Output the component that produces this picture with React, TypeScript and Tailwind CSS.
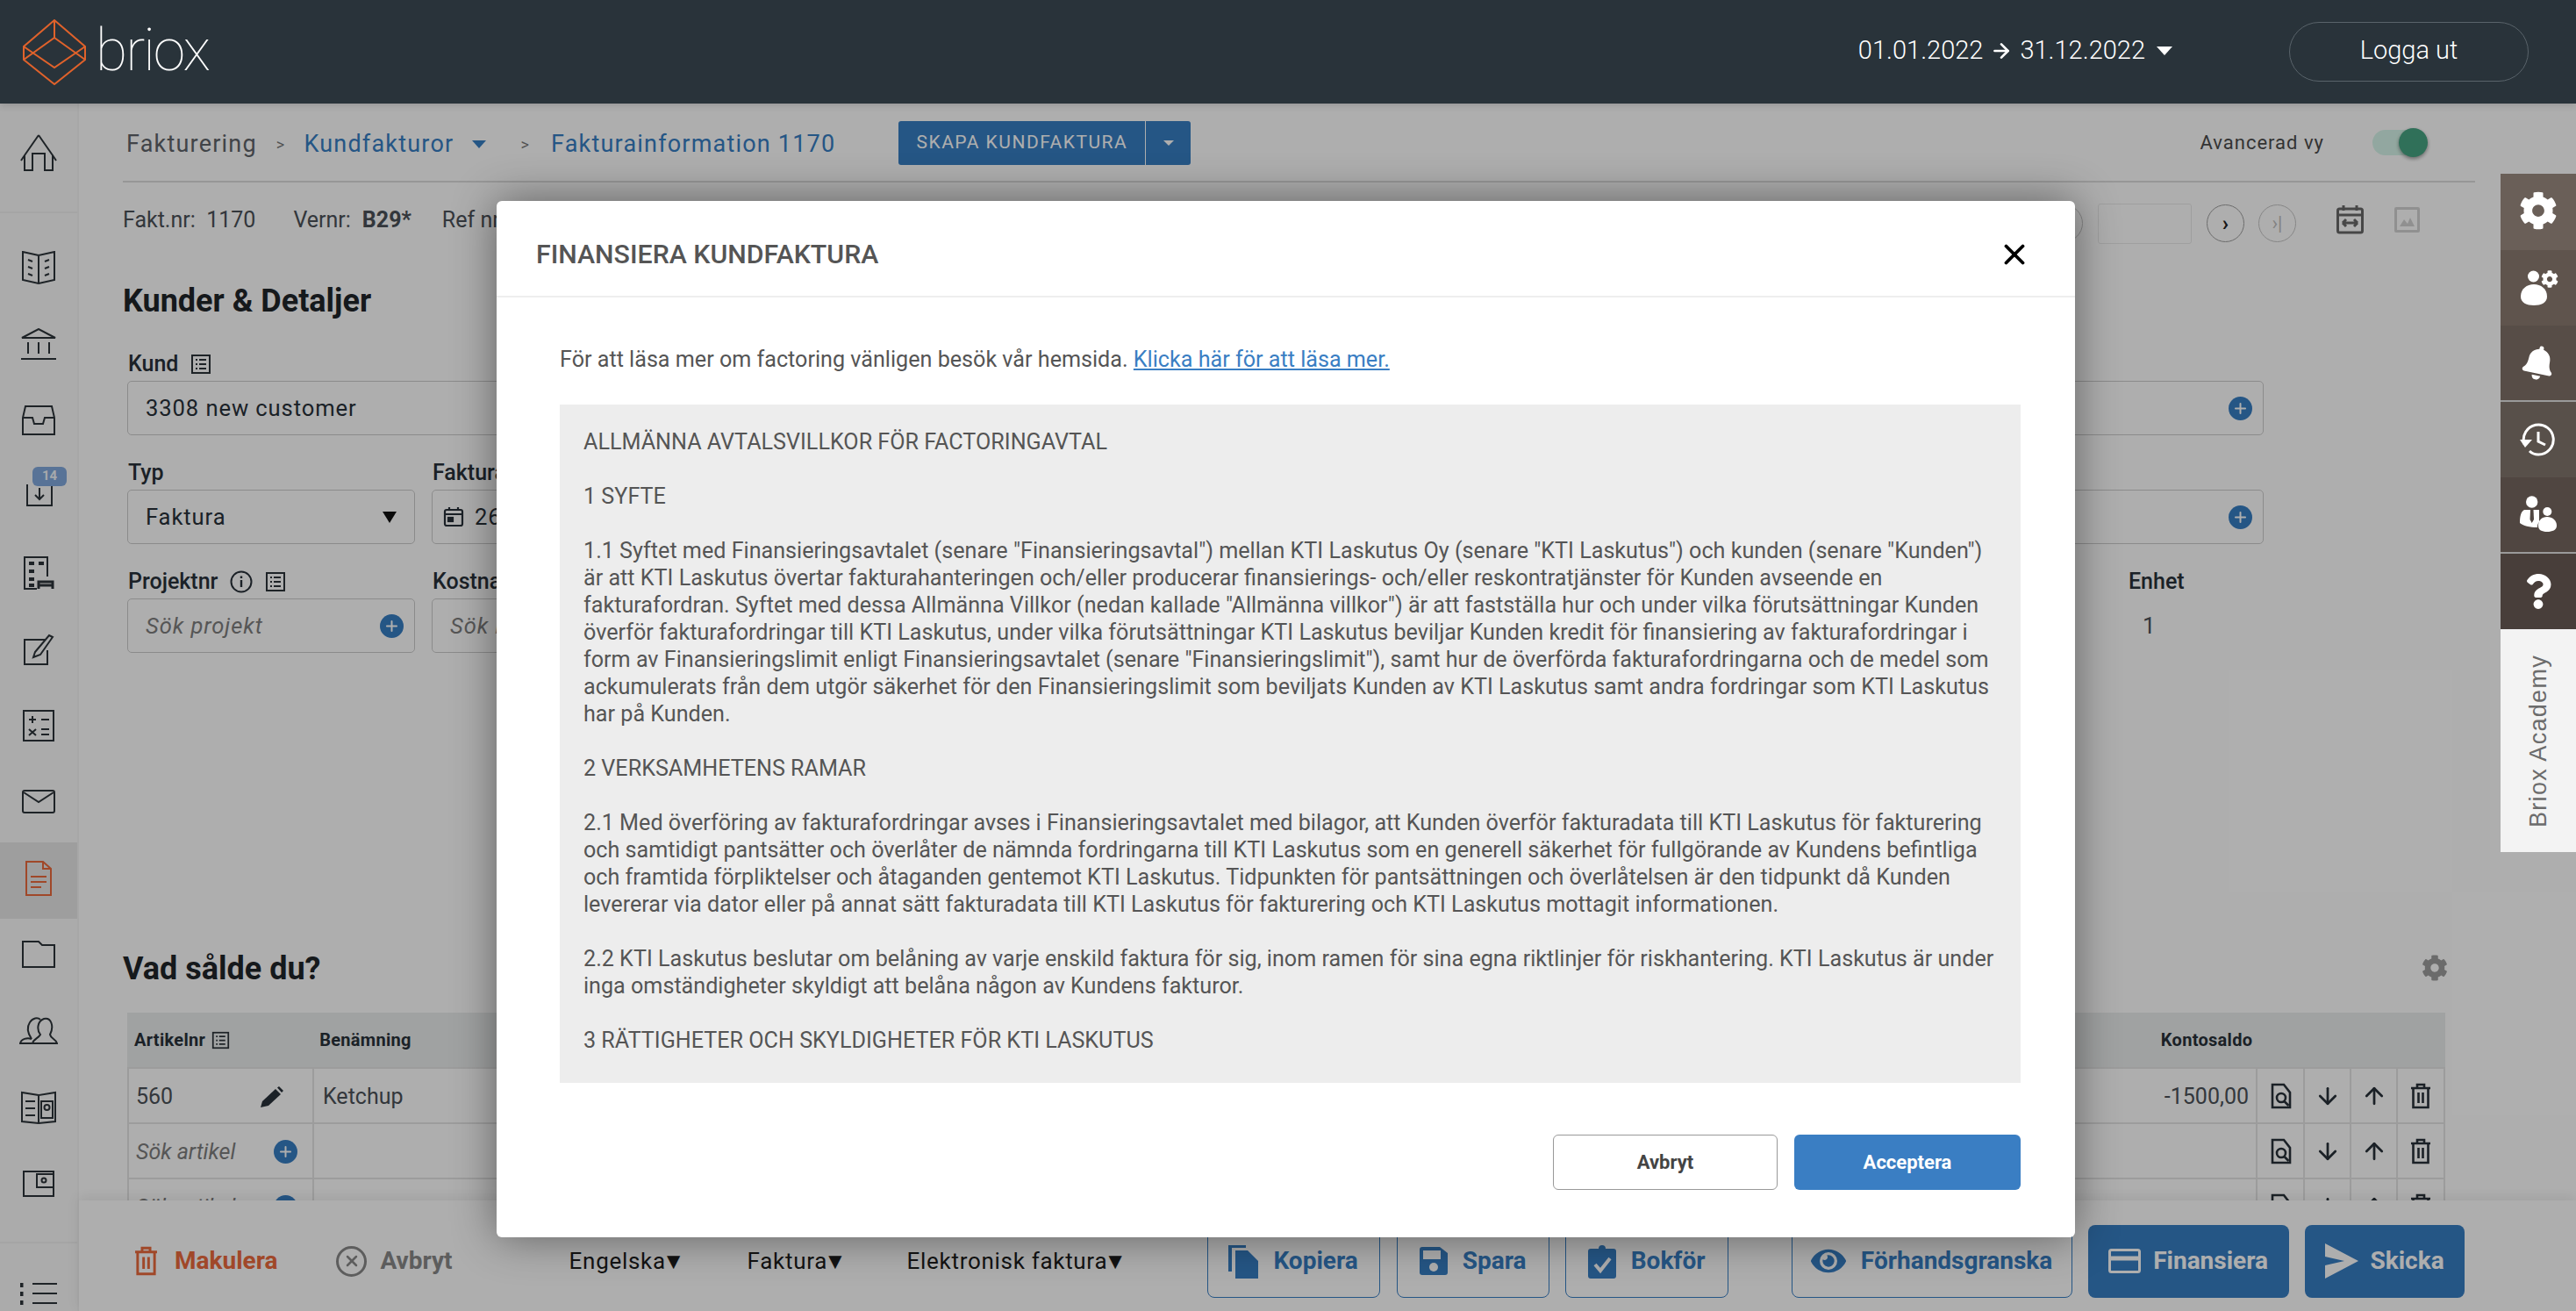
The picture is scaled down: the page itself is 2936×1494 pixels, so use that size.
import { Fragment, type ReactNode } from 'react'
import { FaBell, FaCog, FaQuestion, FaEye } from 'react-icons/fa'
import { ArrowDown, ArrowRight, ArrowUp, Plus, X } from 'lucide-react'

const terms = `ALLMÄNNA AVTALSVILLKOR FÖR FACTORINGAVTAL

1 SYFTE

1.1 Syftet med Finansieringsavtalet (senare "Finansieringsavtal") mellan KTI Laskutus Oy (senare "KTI Laskutus") och kunden (senare "Kunden")
är att KTI Laskutus övertar fakturahanteringen och/eller producerar finansierings- och/eller reskontratjänster för Kunden avseende en
fakturafordran. Syftet med dessa Allmänna Villkor (nedan kallade "Allmänna villkor") är att fastställa hur och under vilka förutsättningar Kunden
överför fakturafordringar till KTI Laskutus, under vilka förutsättningar KTI Laskutus beviljar Kunden kredit för finansiering av fakturafordringar i
form av Finansieringslimit enligt Finansieringsavtalet (senare "Finansieringslimit"), samt hur de överförda fakturafordringarna och de medel som
ackumulerats från dem utgör säkerhet för den Finansieringslimit som beviljats Kunden av KTI Laskutus samt andra fordringar som KTI Laskutus
har på Kunden.

2 VERKSAMHETENS RAMAR

2.1 Med överföring av fakturafordringar avses i Finansieringsavtalet med bilagor, att Kunden överför fakturadata till KTI Laskutus för fakturering
och samtidigt pantsätter och överlåter de nämnda fordringarna till KTI Laskutus som en generell säkerhet för fullgörande av Kundens befintliga
och framtida förpliktelser och åtaganden gentemot KTI Laskutus. Tidpunkten för pantsättningen och överlåtelsen är den tidpunkt då Kunden
levererar via dator eller på annat sätt fakturadata till KTI Laskutus för fakturering och KTI Laskutus mottagit informationen.

2.2 KTI Laskutus beslutar om belåning av varje enskild faktura för sig, inom ramen för sina egna riktlinjer för riskhantering. KTI Laskutus är under
inga omständigheter skyldigt att belåna någon av Kundens fakturor.

3 RÄTTIGHETER OCH SKYLDIGHETER FÖR KTI LASKUTUS`

function Line({ w, h, children, className = '' }: { w: number; h: number; children: ReactNode; className?: string }) {
  return (
    <svg width={w} height={h} viewBox={`0 0 ${w} ${h}`} fill="none" stroke="currentColor" strokeWidth="2" className={className}>
      {children}
    </svg>
  )
}

function Logo() {
  return (
    <svg width="72" height="75" viewBox="0 0 72 75" fill="none" stroke="#e0622b" strokeWidth="2">
      <path d="M36 1 L71 31 L36 55 L1 31 Z" />
      <path d="M36 21 L71 46 L36 74 L1 46 Z" />
      <path d="M36 1 V21 M1 31 V46 M71 31 V46" />
    </svg>
  )
}

function ListIcon({ size = 24 }: { size?: number }) {
  return (
    <svg width={size} height={size} viewBox="0 0 24 24" fill="none" stroke="#2c3338" strokeWidth="2">
      <rect x="2" y="2" width="20" height="20" />
      <path d="M6 7h2M6 12h2M6 17h2M10 7h8M10 12h8M10 17h8" />
    </svg>
  )
}

function PlusDot({ className = '' }: { className?: string }) {
  return (
    <span className={`flex h-[27px] w-[27px] items-center justify-center rounded-full bg-[#367bbf] text-[#fafafa] ${className}`}>
      <Plus size={19} strokeWidth={2.5} />
    </span>
  )
}

function TrashIcon({ w = 24, h = 30 }: { w?: number; h?: number }) {
  return (
    <svg width={w} height={h} viewBox="0 0 24 30" fill="none" stroke="currentColor" strokeWidth="2.6">
      <path d="M1 6h22M8 5V2h8v3M3.500 6v22h17V6M9.500 11v12M14.500 11v12" />
    </svg>
  )
}

function FileSearch() {
  return (
    <svg width="24" height="30" viewBox="0 0 24 30" fill="none" stroke="#283038" strokeWidth="2.6">
      <path d="M2 2h13l7 9v17H2Z" />
      <circle cx="12" cy="17" r="5" />
      <path d="M15.500 21l5 5" />
    </svg>
  )
}

const sideIcons: ReactNode[] = [
  <Line key="book" w={40} h={38} className="text-[#2c3338]">
    <path d="M20 5 L2 1 V33 L20 37 L38 33 V1 Z M20 5 V37" />
    <path d="M8 10l5 2M8 18l5 2M8 26l5 2M32 10l-5 2M32 18l-5 2M32 26l-5 2" />
  </Line>,
  <Line key="bank" w={42} h={36} className="text-[#2c3338]">
    <path d="M2 11 L21 1 L40 11 Z M1 35 H41 M9 16 V29 M21 16 V29 M33 16 V29" />
  </Line>,
  <Line key="inbox" w={40} h={34} className="text-[#2c3338]">
    <path d="M5 1 H35 L38 14 V33 H2 V14 Z M2 14 H13 L15 21 H25 L27 14 H38" />
  </Line>,
  <div key="dl" className="relative mb-[22px] ml-[16px] h-[46px] w-[48px]">
    <svg width="30" height="30" viewBox="0 0 30 30" fill="none" stroke="#2c3338" strokeWidth="2" className="absolute bottom-0 left-[2px]">
      <path d="M1 4 V28 H29 V4 M15 8 V20 M10 16 L15 21 L20 16" />
    </svg>
    <span className="absolute right-0 top-0 flex h-[22px] w-[39px] items-center justify-center rounded-[6px] bg-[#7fa5d8] text-[15px] font-bold text-[#eef2f6]">14</span>
  </div>,
  <Line key="building" w={36} h={40} className="text-[#2c3338]">
    <path d="M28 24 V2 H2 V38 H16" />
    <path d="M7 9h6M18 9h6M7 18h6M7 27h6M7 34h6" strokeWidth="4" />
    <path d="M18 38 V30 H34 V38 M18 34 H34" strokeWidth="3" />
  </Line>,
  <Line key="edit" w={36} h={38} className="text-[#2c3338]">
    <path d="M26 8 H2 V36 H28 V20" />
    <path d="M14 22 L30 3 L34 5 L20 25 L12 28 Z" />
  </Line>,
  <Line key="calc" w={36} h={36} className="text-[#2c3338]">
    <rect x="1" y="1" width="34" height="34" />
    <path d="M7 11h8M11 7v8M7 22l8 7M15 22l-8 7M21 11h9M21 22h9M21 28h9" />
  </Line>,
  <Line key="mail" w={38} h={27} className="text-[#2c3338]">
    <rect x="1" y="1" width="36" height="25" rx="2" />
    <path d="M2 3 L19 14 L36 3" />
  </Line>,
  <Line key="doc" w={30} h={40} className="text-[#e6673c]">
    <path d="M1 1 H20 L29 9 V39 H1 Z M20 1 V9 H29 M6 18 H24 M6 24 H24 M6 30 H18" />
  </Line>,
  <Line key="folder" w={38} h={31} className="text-[#2c3338]">
    <path d="M1 30 V1 H19 L23 5 H37 V30 Z" />
  </Line>,
  <Line key="people" w={44} h={33} className="text-[#2c3338]">
    <path d="M14 26 C9 24 2 26 1 31 H14" />
    <path d="M14 26 C10 20 8 13 12 7 C15 2 21 1 24 4" />
    <path d="M15 31 C16 26 22 25 24 21 C20 16 20 6 28 3 C36 1 40 11 35 21 C36 26 42 26 43 31 Z" />
  </Line>,
  <Line key="address" w={40} h={38} className="text-[#2c3338]">
    <path d="M20 5 L1 2 V35 L20 37 L39 35 V2 L20 5 V37" />
    <path d="M5 12h11M5 20h11M5 28h11" />
    <rect x="23" y="12" width="13" height="19" />
    <circle cx="29.500" cy="19" r="3" />
  </Line>,
  <Line key="wallet" w={36} h={30} className="text-[#2c3338]">
    <path d="M35 4 V1 H1 V29 H35 V4 H16 V19 H35" />
    <circle cx="24" cy="11" r="2.500" />
  </Line>,
]

function Sidebar() {
  return (
    <aside className="flex w-[90px] shrink-0 flex-col border-r-2 border-[#f0f0f0] bg-[#f5f5f5]">
      <div className="flex h-[125px] items-start justify-center border-b-2 border-[#ececec] pt-[35px]">
        <Line w={42} h={42} className="text-[#2c3338]">
          <path d="M21 1 L5 24 V41 H14 V22 H28 V41 H37 V24 L21 1 M5 24 L1 30 M37 24 L41 30" />
        </Line>
      </div>
      <div className="mt-[21px] flex flex-col">
        {sideIcons.map((icon, i) => (
          <div key={i} className={`flex h-[87px] items-center justify-center pb-[6px] ${i === 8 ? 'bg-[#e3e3e3]' : ''}`}>
            {icon}
          </div>
        ))}
      </div>
      <div className="mt-[20px] flex flex-1 items-start justify-center border-t-2 border-[#ececec] pt-[44px]">
        <Line w={42} h={26} className="text-[#2c3338]">
          <path d="M1 1v5M1 11v5M1 21v5" strokeWidth="5" />
          <path d="M14 2H42M14 13H42M14 24H42" />
        </Line>
      </div>
    </aside>
  )
}

function Field({ className = '', children }: { className?: string; children: ReactNode }) {
  return (
    <div className={`flex h-[62px] items-center rounded-[5px] border border-[#c8c8c8] px-[20px] text-[25.600px] tracking-[0.9px] text-[#283038] ${className}`}>
      {children}
    </div>
  )
}

function Label({ children }: { children: ReactNode }) {
  return <div className="mb-[7px] flex h-[28px] items-center gap-[14px] pl-[1px] pt-[3px] text-[25px] font-medium text-[#283038]">{children}</div>
}

function Row({ first, second, value }: { first: ReactNode; second?: string; value?: string }) {
  return (
    <div className="flex h-[63px] border-b-2 border-[#e0e0e0] text-[25px] text-[#4a5056]">
      <div className="flex w-[213px] items-center justify-between border-x-2 border-[#e0e0e0] pl-[8px] pr-[18px] pt-[2px]">{first}</div>
      <div className="flex flex-1 items-center justify-between border-r-2 border-[#e0e0e0] pl-[10px] pr-[8px] pt-[2px]">
        <span>{second}</span>
        <span>{value}</span>
      </div>
      <div className="flex w-[54px] items-center justify-center border-r-2 border-[#e0e0e0] pl-[1px]"><FileSearch /></div>
      <div className="flex w-[53px] items-center justify-center border-r-2 border-[#e0e0e0] text-[#283038]"><ArrowDown size={30} strokeWidth={2.2} /></div>
      <div className="flex w-[53px] items-center justify-center border-r-2 border-[#e0e0e0] text-[#283038]"><ArrowUp size={30} strokeWidth={2.2} /></div>
      <div className="flex w-[54px] items-center justify-center border-r-2 border-[#e0e0e0] text-[#283038]"><TrashIcon /></div>
    </div>
  )
}

function Footer() {
  const outline = 'flex h-[83px] items-center gap-[17px] rounded-[8px] border border-[#367bbf] text-[#367bbf] justify-center'
  const solid = 'flex h-[83px] items-center gap-[14px] rounded-[8px] bg-[#367bbf] text-[#fafafa] justify-center'
  const lang = 'text-[26px] font-normal tracking-[0.7px] text-[#1c1c1c]'
  const caret = <span className="-ml-[4px]">▼</span>
  return (
    <footer className="relative flex h-[126px] shrink-0 items-center bg-[#fafafa] pl-[62px] pt-[12px] text-[28px] font-bold shadow-[0_-4px_14px_rgba(0,0,0,0.08)]">
      <div className="flex items-center gap-[18px] text-[#e6673c]"><TrashIcon w={29} h={34} />Makulera</div>
      <div className="ml-[67px] flex items-center gap-[15px] text-[#868686]">
        <span className="flex h-[35px] w-[35px] items-center justify-center rounded-full border-[3px] border-[#868686]"><X size={20} strokeWidth={3} /></span>
        Avbryt
      </div>
      <div className={`ml-[133px] w-[203px] ${lang}`}>Engelska{caret}</div>
      <div className={`w-[182px] ${lang}`}>Faktura{caret}</div>
      <div className={`w-[342px] ${lang}`}>Elektronisk faktura{caret}</div>
      <div className={`${outline} w-[197px]`}>
        <svg width="34" height="40" viewBox="0 0 34 40" fill="currentColor"><path d="M0 2h20v3H4v27H0Z" /><path d="M8 8h14l12 12v20H8Z" /></svg>
        Kopiera
      </div>
      <div className={`${outline} ml-[19px] w-[174px]`}>
        <svg width="32" height="32" viewBox="0 0 32 32">
          <path fill="currentColor" d="M3 0h20l9 7v22a3 3 0 0 1-3 3H3a3 3 0 0 1-3-3V3a3 3 0 0 1 3-3Z" />
          <rect x="4" y="4" width="20" height="10" fill="#fafafa" />
          <circle cx="16" cy="23" r="5" fill="#fafafa" />
        </svg>
        Spara
      </div>
      <div className={`${outline} ml-[18px] w-[186px]`}>
        <svg width="32" height="40" viewBox="0 0 32 40"><path fill="currentColor" d="M3 6h9a4 4 0 0 1 8 0h9a3 3 0 0 1 3 3v28a3 3 0 0 1-3 3H3a3 3 0 0 1-3-3V9a3 3 0 0 1 3-3Z" /><path d="M8 24l6 7 11-14" stroke="#fafafa" strokeWidth="4" fill="none" /></svg>
        Bokför
      </div>
      <div className={`${outline} ml-[72px] w-[320px]`}><FaEye size={40} />Förhandsgranska</div>
      <div className={`${solid} ml-[18px] w-[229px]`}>
        <svg width="37" height="28" viewBox="0 0 37 28" fill="none" stroke="currentColor" strokeWidth="3">
          <rect x="1.500" y="1.500" width="34" height="25" rx="2" />
          <path d="M2 11h33" strokeWidth="5" />
        </svg>
        Finansiera
      </div>
      <div className={`${solid} ml-[18px] w-[182px]`}>
        <svg width="38" height="40" viewBox="0 0 38 40" fill="currentColor"><path d="M0 0 L38 20 L0 40 L0 25 L22 20 L0 15 Z" /></svg>
        Skicka
      </div>
    </footer>
  )
}

function Main() {
  return (
    <main className="flex min-w-0 flex-1 flex-col">
      <div className="min-h-0 flex-1 overflow-hidden pl-[50px] pr-[115px] text-[#283038]">
        <div className="flex h-[90px] items-center border-b-2 border-[#d8d8d8] pl-[4px] pt-[4px] text-[27px] tracking-[1.200px]">
          <span className="text-[#5d6268]">Fakturering</span>
          <span className="ml-[22px] text-[18px] text-[#777]">&gt;</span>
          <span className="ml-[21px] text-[#367bbf]">Kundfakturor</span>
          <span className="ml-[21px] h-0 w-0 border-x-[8px] border-t-[9px] border-x-transparent border-t-[#367bbf]" />
          <span className="ml-[39px] text-[18px] text-[#777]">&gt;</span>
          <span className="ml-[24px] text-[#367bbf]">Fakturainformation 1170</span>
          <div className="-mt-[2px] ml-[72px] flex h-[50px] text-[#fafafa]">
            <span className="flex w-[281px] items-center justify-center rounded-l-[3px] bg-[#367bbf] text-[21px] tracking-[1.500px]">SKAPA KUNDFAKTURA</span>
            <span className="ml-[1px] flex w-[51px] items-center justify-center rounded-r-[3px] bg-[#367bbf]">
              <span className="h-0 w-0 border-x-[6px] border-t-[6px] border-x-transparent border-t-[#fafafa]" />
            </span>
          </div>
          <span className="-mt-[4px] ml-auto text-[22px] tracking-[1px] text-[#4a4a4a]">Avancerad vy</span>
          <div className="relative -mt-[4px] ml-[55px] mr-[54px] h-[29px] w-[63px]">
            <span className="absolute left-0 top-0 h-[29px] w-[46px] rounded-l-full bg-[#d2f0e5]" />
            <span className="absolute right-0 top-[-2px] h-[33px] w-[33px] rounded-full bg-[#45a180] shadow-[0_2px_4px_rgba(0,0,0,0.4)]" />
          </div>
        </div>

        <div className="flex h-[71px] items-center pt-[14px] text-[25px] text-[#4a5056]">
          <span>Fakt.nr:&nbsp; 1170</span>
          <span className="ml-[43px]">Vernr:</span>
          <span className="ml-[13px] font-bold">B29*</span>
          <span className="ml-[35px]">Ref nr</span>
          <div className="ml-auto flex items-center">
            <span className="mr-[17px] mt-[8px] h-[43px] w-[43px] rounded-full border border-[#c0c0c0]" />
            <span className="mt-[8px] h-[46px] w-[107px] rounded-[3px] border border-[#e4e4e4]" />
            <span className="ml-[17px] mt-[8px] flex h-[43px] w-[43px] items-center justify-center rounded-full border border-[#9a9a9a] text-[24px] font-bold leading-none text-[#222]">›</span>
            <span className="ml-[16px] mt-[8px] flex h-[43px] w-[43px] items-center justify-center rounded-full border border-[#c0c0c0] text-[22px] leading-none text-[#bbb]">›|</span>
            <svg width="31" height="34" viewBox="0 0 31 34" className="mb-[2px] ml-[46px]" fill="none" stroke="#666" strokeWidth="3">
              <rect x="1.500" y="5" width="28" height="27" rx="2" />
              <path d="M8 1v6M23 1v6M2 12h27M7 21h17M7 21l4-4M7 21l4 4M24 21l-4-4M24 21l-4 4" />
            </svg>
            <svg width="29" height="29" viewBox="0 0 29 29" className="ml-[35px] mr-[63px]" fill="#cfcfcf">
              <path d="M2 0h25a2 2 0 0 1 2 2v25a2 2 0 0 1-2 2H2a2 2 0 0 1-2-2V2a2 2 0 0 1 2-2Zm1 3v23h23V3Z" />
              <path d="M6 22l5-8 4 5 3-7 5 10Z" />
            </svg>
          </div>
        </div>

        <h2 className="mt-[41px] text-[36px] font-bold leading-[46px] text-[#1f2429]">Kunder &amp; Detaljer</h2>

        <div className="mt-[33px] pl-[5px]">
          <Label>Kund <ListIcon /></Label>
          <Field className="w-[2435px] justify-between pr-[12px]">3308 new customer<PlusDot /></Field>
          <div className="mt-[27px] flex gap-[19px]">
            <div className="w-[328px]">
              <Label>Typ</Label>
              <Field className="justify-between">Faktura<span className="h-0 w-0 border-x-[8px] border-t-[13px] border-x-transparent border-t-[#111]" /></Field>
            </div>
            <div className="w-[328px]">
              <Label>Fakturadatum</Label>
              <Field className="gap-[12px] pl-[12px]">
                <svg width="24" height="24" viewBox="0 0 24 24" fill="none" stroke="#283038" strokeWidth="2.2"><rect x="2" y="4" width="20" height="18" rx="2" /><path d="M2 9h20M7 1v4M17 1v4" /><rect x="6" y="13" width="5" height="4" fill="#283038" /></svg>
                26.01.2022
              </Field>
            </div>
            <div className="ml-auto mr-[241px] w-[700px] self-end">
              <Field className="justify-end pr-[12px]"><PlusDot /></Field>
            </div>
          </div>
          <div className="mt-[27px] flex gap-[19px]">
            <div className="w-[328px]">
              <Label>
                Projektnr
                <svg width="26" height="26" viewBox="0 0 26 26" fill="none" stroke="#283038" strokeWidth="2"><circle cx="13" cy="13" r="11.500" /><path d="M13 11v8M13 6.500v2.500" strokeWidth="2.400" /></svg>
                <ListIcon />
              </Label>
              <Field className="justify-between pr-[12px]"><i className="text-[#7c7c7c]">Sök projekt</i><PlusDot /></Field>
            </div>
            <div className="w-[328px]">
              <Label>Kostnadsställe</Label>
              <Field><i className="text-[#7c7c7c]">Sök kostnad</i></Field>
            </div>
            <div className="ml-[1586px]">
              <Label>Enhet</Label>
              <div className="mt-[19px] pl-[17px] text-[26px] text-[#4a5056]">1</div>
            </div>
          </div>
        </div>

        <div className="relative mt-[337px]">
          <h2 className="text-[36px] font-bold leading-[46px] text-[#1f2429]">Vad sålde du?</h2>
          <FaCog size={30} className="absolute right-[31px] top-[7px] text-[#9a9a9a]" />
        </div>

        <div className="ml-[5px] mt-[27px] w-[2642px] text-[20px] font-bold text-[#283038]">
          <div className="flex h-[64px] items-center border-b-2 border-[#e0e0e0] bg-[#e6e9e8] pl-[8px]">
            <span className="tracking-[0.3px]">Artikelnr</span>
            <span className="ml-[7px]"><ListIcon size={21} /></span>
            <span className="ml-[102px] tracking-[0.3px]">Benämning</span>
            <span className="ml-[1994px] tracking-[0.3px]">Kontosaldo</span>
          </div>
          <div className="font-normal">
            <Row
              first={
                <Fragment>
                  560
                  <svg width="26" height="24" viewBox="0 0 26 24" fill="#283038" className="mr-[15px]"><path d="M0 24l2-7L17 3l6 6L9 22Z" /><path d="M19 1.500l2-1.500 5 5-2 2Z" /></svg>
                </Fragment>
              }
              second="Ketchup"
              value="-1500,00"
            />
            <Row first={<Fragment><i className="text-[#7c7c7c]">Sök artikel</i><PlusDot className="-mr-px" /></Fragment>} />
            <Row first={<Fragment><i className="text-[#7c7c7c]">Sök artikel</i><PlusDot className="-mr-px" /></Fragment>} />
          </div>
        </div>
      </div>
      <Footer />
    </main>
  )
}

function SideTabs() {
  const tabs: [string, ReactNode][] = [
    ['bg-[#6a5f58]', <FaCog key="a" size={44} className="mb-[2px]" />],
    ['bg-[#5f544d]', (
      <svg key="b" width="86" height="86" viewBox="0 0 86 86" fill="#fff">
        <circle cx="37.500" cy="30" r="6.500" />
        <path d="M23 53 C23 44 30 39 38 39 C46 39 53 44 53 53 C53 60 46 63 38 63 C30 63 23 60 23 53Z" />
        <FaCog x={46} y={23} size={20} />
      </svg>
    )],
    ['bg-[#574d47]', <FaBell key="c" size={39} className="rotate-[12deg]" />],
    ['bg-[#58504a]', (
      <svg key="d" width="86" height="86" viewBox="0 0 86 86" fill="none" stroke="#fff" strokeWidth="3">
        <path d="M27 48 A17 17 0 1 1 43 60 C38 60 35 58 33 56" />
        <path d="M22 43 H36 L28 52 Z" fill="#fff" stroke="none" />
        <path d="M43 34 V45 L51 49" />
      </svg>
    )],
    ['bg-[#504641]', (
      <svg key="e" width="86" height="86" viewBox="0 0 86 86" fill="#fff">
        <circle cx="35.700" cy="29" r="6.700" />
        <path d="M27 38 H44 V52 C42 54 42 56 42 58 C34 58 25 56 22 53 C22 46 23 40 27 38 Z" />
        <path d="M34 38 H37.500 L38 49 L35.700 53 L33.500 49 Z" fill="#504641" />
        <circle cx="53.300" cy="40" r="5" />
        <path d="M43 56 C43 50 47 46 53 46 C59 46 64 50 64 56 C64 61 59 63 53 63 C47 63 43 61 43 56Z" />
      </svg>
    )],
    ['bg-[#483e3a]', <FaQuestion key="f" size={40} />],
  ]
  return (
    <div className="absolute right-0 top-[198px] z-20 flex w-[86px] flex-col text-white">
      {tabs.map(([bg, icon], i) => (
        <div key={i} className={`flex h-[86.500px] items-center justify-center ${bg} ${i === 2 || i === 4 ? 'border-b-2 border-[#9a9a9a]' : ''}`}>
          {icon}
        </div>
      ))}
      <div className="flex h-[254px] items-center justify-center bg-[#f3f3f3]">
        <span className="rotate-180 font-['Liberation_Sans',sans-serif] text-[27px] tracking-[1.300px] text-[#6c6c6c] [writing-mode:vertical-rl]">Briox Academy</span>
      </div>
    </div>
  )
}

function FinanceModal() {
  return (
    <div className="absolute inset-x-0 bottom-0 top-[118px] z-10 bg-black/30 pl-[566px] pt-[111px]">
      <div className="flex h-[1181px] w-[1799px] flex-col rounded-[6px] bg-white shadow-[0_0_50px_rgba(0,0,0,0.45)]">
        <div className="flex h-[110px] shrink-0 items-center justify-between border-b-2 border-[#eeeeee] pl-[45px] pr-[50px] pt-[14px]">
          <h3 className="text-[30.300px] font-medium text-[#555]">FINANSIERA KUNDFAKTURA</h3>
          <X size={38} strokeWidth={2.4} className="text-black" />
        </div>
        <div className="flex min-h-0 flex-1 flex-col pl-[72px] pr-[62px]">
          <p className="mt-[55px] text-[25.150px] leading-[31px] text-[#555]">
            För att läsa mer om factoring vänligen besök vår hemsida.{' '}
            <a className="text-[#3a7ec3] underline">Klicka här för att läsa mer.</a>
          </p>
          <div className="mt-[36px] h-[773px] overflow-hidden whitespace-pre bg-[#ededed] pl-[27px] pt-[27px] text-[25.150px] leading-[31px] text-[#555]">
            {terms}
          </div>
          <div className="mt-[59px] flex justify-end gap-[19px]">
            <button className="h-[63px] w-[256px] rounded-[6px] border border-[#999] text-[22px] font-bold text-[#444]">Avbryt</button>
            <button className="h-[63px] w-[258px] rounded-[6px] bg-[#3a7ec3] text-[22px] font-bold text-white">Acceptera</button>
          </div>
        </div>
      </div>
    </div>
  )
}

export default function App() {
  return (
    <div className="relative flex h-screen w-full flex-col overflow-hidden bg-[#fafafa] font-['Roboto',sans-serif]">
      <header className="relative z-20 flex h-[118px] shrink-0 items-center bg-[#29333a] pl-[26px] pr-[54px] text-white shadow-[0_2px_8px_rgba(0,0,0,0.15)]">
        <Logo />
        <span className="mb-[2px] ml-[11px] text-[66px] font-thin leading-none tracking-[-2px]">briox</span>
        <div className="mb-[2px] ml-auto flex items-center text-[29px] font-light">
          <span>01.01.2022</span>
          <ArrowRight size={26} strokeWidth={2.4} className="mx-[8px]" />
          <span>31.12.2022</span>
          <span className="ml-[13px] h-0 w-0 border-x-[9px] border-t-[10px] border-x-transparent border-t-white" />
        </div>
        <button className="ml-[133px] h-[68px] w-[273px] rounded-full border border-[#59636a] pb-[2px] text-[29px] font-light">Logga ut</button>
      </header>
      <div className="flex min-h-0 flex-1">
        <Sidebar />
        <Main />
      </div>
      <FinanceModal />
      <SideTabs />
    </div>
  )
}
